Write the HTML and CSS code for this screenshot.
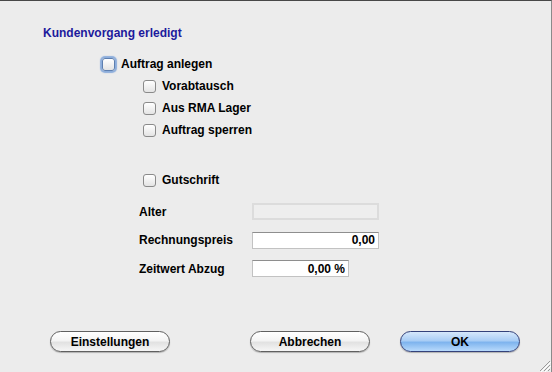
FILE: index.html
```html
<!DOCTYPE html>
<html>

<head>
  <meta charset="utf-8">
  <meta name="viewport" content="width=device-width">
  <title>Kundenvorgang</title>
  <link rel="stylesheet" href="styles.css">
</head>

<body>
  <div class="dialog">
    <div class="title">Kundenvorgang erledigt</div>

    <label class="check main">
      <input type="checkbox" class="box focused">
      <span>Auftrag anlegen</span>
    </label>

    <div class="sub">
      <label class="check">
        <input type="checkbox" class="box">
        <span>Vorabtausch</span>
      </label>
      <label class="check">
        <input type="checkbox" class="box">
        <span>Aus RMA Lager</span>
      </label>
      <label class="check">
        <input type="checkbox" class="box">
        <span>Auftrag sperren</span>
      </label>
    </div>

    <div class="sub credit">
      <label class="check">
        <input type="checkbox" class="box">
        <span>Gutschrift</span>
      </label>
    </div>

    <div class="form">
      <div class="field-row">
        <span class="label">Alter</span>
        <input type="text" class="field wide" disabled>
      </div>
      <div class="field-row">
        <span class="label">Rechnungspreis</span>
        <input type="text" class="field wide" value="0,00">
      </div>
      <div class="field-row">
        <span class="label">Zeitwert Abzug</span>
        <input type="text" class="field narrow" value="0,00 %">
      </div>
    </div>

    <div class="buttons">
      <button class="button">Einstellungen</button>
      <button class="button cancel">Abbrechen</button>
      <button class="button default">OK</button>
    </div>

    <svg class="grip" width="14" height="14" viewBox="0 0 14 14">
      <line x1="13" y1="3" x2="3" y2="13" stroke="#9a9a9a" stroke-width="1" />
      <line x1="13" y1="7" x2="7" y2="13" stroke="#9a9a9a" stroke-width="1" />
      <line x1="13" y1="11" x2="11" y2="13" stroke="#9a9a9a" stroke-width="1" />
      <line x1="14" y1="4" x2="4" y2="14" stroke="#ffffff" stroke-width="1" />
      <line x1="14" y1="8" x2="8" y2="14" stroke="#ffffff" stroke-width="1" />
    </svg>
  </div>
</body>

</html>
```

FILE: styles.css
```css
body {
  margin: 0;
  padding: 0;
  font-family: "Liberation Sans", Arial, sans-serif;
  font-size: 12px;
  font-weight: bold;
  color: #000;
  background-color: #ececec;
}

.dialog {
  position: relative;
  width: 552px;
  height: 372px;
  box-sizing: border-box;
  border-top: 1px solid #474747;
  border-right: 1px solid #8a8a8a;
  overflow: hidden;
}

.title {
  margin: 25px 0 0 43px;
  line-height: 14px;
  color: #1d1a9c;
}

.check {
  display: flex;
  align-items: center;
  height: 22px;
}

.check span {
  line-height: 14px;
}

.main {
  margin: 13px 0 0 102px;
}

.main span {
  margin-left: 6px;
}

.sub {
  margin-left: 143px;
}

.sub span {
  margin-left: 6px;
}

.credit {
  margin-top: 28px;
}

.box {
  appearance: none;
  -webkit-appearance: none;
  margin: 0;
  width: 13px;
  height: 13px;
  border: 1px solid #8a8a8a;
  border-radius: 3px;
  background: linear-gradient(#ffffff, #e4e4e4);
  box-sizing: border-box;
}

.focused {
  border-color: #5d7fb0;
  box-shadow: 0 0 1px 2px rgba(108, 152, 214, 0.75);
}

.form {
  margin: 12px 0 0 139px;
}

.field-row {
  display: flex;
  align-items: center;
  height: 17px;
  margin-bottom: 11.5px;
}

.label {
  width: 113px;
  line-height: 14px;
}

.field {
  height: 17px;
  box-sizing: border-box;
  padding: 0 3px 0 0;
  border: 1px solid #c2c2c2;
  border-top-color: #8e8e8e;
  background: #fff;
  font-family: "Liberation Sans", Arial, sans-serif;
  font-size: 12px;
  font-weight: bold;
  color: #000;
  text-align: right;
  outline: none;
}

.field:disabled {
  background: #eeeeee;
  border: 2px solid #dcdcdc;
}

.wide {
  width: 127px;
}

.narrow {
  width: 97px;
}

.buttons {
  display: flex;
  margin: 54px 0 0 50px;
}

.button {
  width: 120px;
  height: 21px;
  padding: 0;
  border: 1px solid #606060;
  border-radius: 11px;
  background: linear-gradient(#ffffff 0%, #f4f4f4 45%, #e2e2e2 55%, #f6f6f6 100%);
  box-shadow: 0 1px 1px rgba(0, 0, 0, 0.25);
  font-family: "Liberation Sans", Arial, sans-serif;
  font-size: 12px;
  font-weight: bold;
  color: #000;
}

.cancel {
  margin-left: 80px;
}

.default {
  margin-left: 30px;
  border-color: #34427a;
  background: linear-gradient(#d6e8fb 0%, #a9cdf5 45%, #7fb4ee 55%, #b8dafc 100%);
}

.grip {
  position: absolute;
  right: 0;
  bottom: 0;
}
```
